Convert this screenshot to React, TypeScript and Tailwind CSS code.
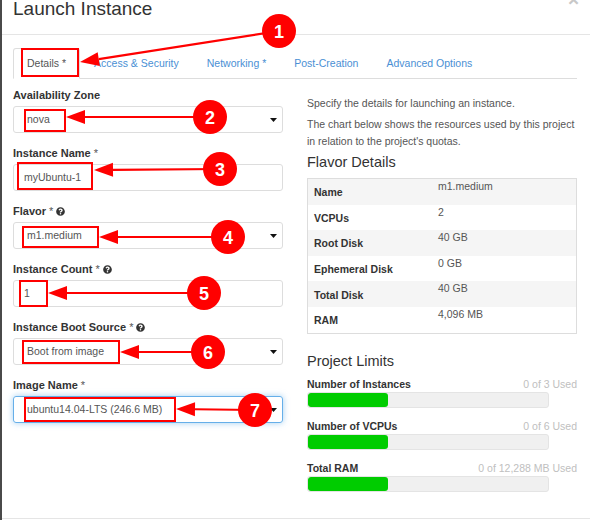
import { FaQuestionCircle } from "react-icons/fa";

const tabs = ["Details *", "Access & Security", "Networking *", "Post-Creation", "Advanced Options"];

const fields = [
  { label: "Availability Zone", value: "nova", select: true },
  { label: "Instance Name", req: true, value: "myUbuntu-1" },
  { label: "Flavor", req: true, value: "m1.medium", select: true, help: true },
  { label: "Instance Count", req: true, value: "1", help: true },
  { label: "Instance Boot Source", req: true, value: "Boot from image", select: true, help: true },
  { label: "Image Name", req: true, value: "ubuntu14.04-LTS (246.6 MB)", select: true, focus: true },
];

const flavor = [
  ["Name", "m1.medium"],
  ["VCPUs", "2"],
  ["Root Disk", "40 GB"],
  ["Ephemeral Disk", "0 GB"],
  ["Total Disk", "40 GB"],
  ["RAM", "4,096 MB"],
];

const limits = [
  { name: "Number of Instances", used: "0 of 3 Used" },
  { name: "Number of VCPUs", used: "0 of 6 Used" },
  { name: "Total RAM", used: "0 of 12,288 MB Used" },
];

// annotation overlay: red boxes, arrows and numbered circles
const boxes = [
  [20, 49, 56, 27],
  [23, 110, 40, 21],
  [16, 163, 74, 26],
  [21, 227, 75, 20],
  [18, 281, 27, 25],
  [21, 341, 96, 22],
  [23, 398, 150, 23],
];

const markers = [
  { n: 1, cx: 277, cy: 31, tip: [78, 62] },
  { n: 2, cx: 208, cy: 117, tip: [64, 117] },
  { n: 3, cx: 218, cy: 169, tip: [92, 170] },
  { n: 4, cx: 226, cy: 237, tip: [97, 237] },
  { n: 5, cx: 202, cy: 293, tip: [46, 293] },
  { n: 6, cx: 206, cy: 352, tip: [118, 352] },
  { n: 7, cx: 253, cy: 410, tip: [174, 409] },
];

function Arrow({ cx, cy, tip }: { cx: number; cy: number; tip: number[] }) {
  const [tx, ty] = tip;
  const dx = cx - tx;
  const dy = cy - ty;
  const len = Math.hypot(dx, dy);
  const ux = dx / len;
  const uy = dy / len;
  const bx = tx + ux * 19;
  const by = ty + uy * 19;
  const px = -uy * 7;
  const py = ux * 7;
  return (
    <g>
      <line x1={cx} y1={cy} x2={bx} y2={by} stroke="#ff0000" strokeWidth={2.2} />
      <polygon points={`${tx},${ty} ${bx + px},${by + py} ${bx - px},${by - py}`} fill="#ff0000" />
    </g>
  );
}

function Annotations() {
  return (
    <svg className="absolute inset-0 pointer-events-none" width={590} height={520} viewBox="0 0 590 520">
      {boxes.map(([x, y, w, h], i) => (
        <rect key={i} x={x} y={y} width={w} height={h} fill="none" stroke="#ff0000" strokeWidth={2} />
      ))}
      {markers.map((m) => (
        <Arrow key={`a${m.n}`} cx={m.cx} cy={m.cy} tip={m.tip} />
      ))}
      {markers.map((m) => (
        <g key={`c${m.n}`}>
          <circle cx={m.cx} cy={m.cy} r={17} fill="#ff0000" />
          <text
            x={m.cx}
            y={m.cy + 1}
            textAnchor="middle"
            dominantBaseline="central"
            fill="#fff"
            fontWeight="bold"
            fontSize={18}
            fontFamily="'Liberation Sans', Arial, sans-serif"
          >
            {m.n}
          </text>
        </g>
      ))}
    </svg>
  );
}

function Caret() {
  return (
    <svg width="7" height="4" viewBox="0 0 7 4" className="shrink-0">
      <polygon points="0,0 7,0 3.5,4" fill="#111" />
    </svg>
  );
}

export default function App() {
  return (
    <div className="relative w-[590px] h-[520px] overflow-hidden bg-white border-l-2 border-[#4a4a4a] flex flex-col font-['Liberation_Sans',Arial,sans-serif] text-[#333]">
      {/* Header */}
      <div className="h-[35px] shrink-0 border-b border-[#e5e5e5] pl-[11px]">
        <h1 className="mt-[-2px] text-[19px] leading-[21px] font-normal text-[#333]">Launch Instance</h1>
      </div>
      <span className="absolute left-[566px] top-[-10px] text-[19px] leading-none font-bold text-[#c8c8c8]">×</span>

      {/* Body */}
      <div className="flex-1 pl-[11px] pr-[13px] pt-[13px]">
        {/* Tabs */}
        <div className="flex h-[31px] border-b border-[#ddd] text-[10.5px]">
          {tabs.map((t, i) => (
            <div
              key={t}
              className={`h-[31px] px-[13px] border rounded-t-[3px] flex items-center ${
                i === 0 ? "border-[#ddd] border-b-white bg-white text-[#555]" : "border-transparent text-[#4a8fd4]"
              }`}
            >
              {t}
            </div>
          ))}
        </div>

        {/* Columns */}
        <div className="mt-[8px] flex gap-[24px]">
          {/* Form */}
          <div className="w-[270px] flex flex-col">
            {fields.map((f) => (
              <div key={f.label} className="h-[58px]">
                <div className="h-[16px] flex items-center gap-[3px] text-[11px] font-bold text-[#333]">
                  <span>
                    {f.label}
                    {f.req && <span className="font-normal text-[#555]"> *</span>}
                  </span>
                  {f.help && <FaQuestionCircle size={9} className="text-[#333]" />}
                </div>
                <div
                  className={`mt-[3px] h-[27px] rounded-[3px] border flex items-center text-[10.5px] text-[#555] ${
                    f.select ? "pl-[13px] pr-[5px]" : "pl-[10px]"
                  } ${f.focus ? "border-[#66afe9] shadow-[0_0_6px_rgba(102,175,233,0.6)]" : "border-[#ddd]"}`}
                >
                  <span className="flex-1">{f.value}</span>
                  {f.select && <Caret />}
                </div>
              </div>
            ))}
          </div>

          {/* Info */}
          <div className="w-[270px] pt-[8px] text-[10.5px] leading-[17px] text-[#555]">
            <p className="whitespace-nowrap">Specify the details for launching an instance.</p>
            <p className="mt-[4px] whitespace-nowrap">
              The chart below shows the resources used by this project
              <br />
              in relation to the project's quotas.
            </p>
            <h3 className="mt-[3px] text-[14.5px] leading-[18px] font-normal text-[#333]">Flavor Details</h3>
            <div className="mt-[7px] border border-[#ddd]">
              {flavor.map(([k, v], i) => (
                <div key={k} className={`h-[25.6px] flex ${i % 2 === 0 ? "bg-[#f5f5f5]" : "bg-white"}`}>
                  <div className="w-[130px] pl-[6px] flex items-center font-bold text-[#333] leading-[13px] pt-[2px]">{k}</div>
                  <div className="leading-[13px] pt-[1px] text-[#555]">{v}</div>
                </div>
              ))}
            </div>

            <h3 className="mt-[18px] text-[14.5px] leading-[18px] font-normal text-[#333]">Project Limits</h3>
            <div className="mt-[7px] flex flex-col gap-[11px]">
              {limits.map((l) => (
                <div key={l.name}>
                  <div className="flex justify-between leading-[14px]">
                    <span className="font-bold text-[#333]">{l.name}</span>
                    <span className="text-[#c0c0c0]">{l.used}</span>
                  </div>
                  <div className="mt-[1px] w-[242px] h-[16px] rounded-[3px] bg-[#f0f0f0] border border-[#e4e4e4] overflow-hidden">
                    <div className="h-full w-1/3 bg-[#00cc00] rounded-[3px]" />
                  </div>
                </div>
              ))}
            </div>
          </div>
        </div>
      </div>

      {/* Footer rule */}
      <div className="h-px shrink-0 bg-[#e5e5e5] mb-px" />

      <Annotations />
    </div>
  );
}
